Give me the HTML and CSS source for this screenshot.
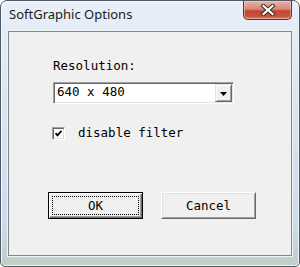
FILE: index.html
```html
<!DOCTYPE html>
<html>
<head>
  <link rel="stylesheet" href="styles.css">
</head>
<body>
  <div class="window">
    <div class="titlebar">
      <span class="title">SoftGraphic Options</span>
      <button class="close-btn">
        <svg viewBox="0 0 16 12" width="16" height="12">
          <path d="M3.5 2l9 8M12.5 2l-9 8" stroke="#3b2a28" stroke-width="4.2" stroke-linecap="square"/>
          <path d="M3.5 2l9 8M12.5 2l-9 8" stroke="#fff" stroke-width="2.2" stroke-linecap="square"/>
        </svg>
      </button>
    </div>

    <div class="client">
      <div class="fields">
        <div class="field-label">Resolution:</div>
        <div class="combo">
          <span class="combo-value">640 x 480</span>
          <span class="combo-btn">
            <svg viewBox="0 0 7 4" width="7" height="4">
              <path d="M0 0h7L3.5 4z" fill="#000"/>
            </svg>
          </span>
        </div>
        <label class="check">
          <span class="check-box">
            <svg viewBox="0 0 7 7" width="7" height="7">
              <path d="M0.5 3.2l2 2.2 4-4.6" fill="none" stroke="#000" stroke-width="1.8"/>
            </svg>
          </span>
          <span class="check-text">disable filter</span>
        </label>
      </div>

      <!-- dialog buttons -->
      <div class="buttons">
        <button class="btn default">OK</button>
        <button class="btn">Cancel</button>
      </div>
    </div>
  </div>
</body>
</html>
```

FILE: styles.css
```css
body {
  margin: 0;
  background: #fff;
}

.window {
  width: 300px;
  height: 267px;
  box-sizing: border-box;
  display: flex;
  flex-direction: column;
  border: 1px solid #4f5a66;
  border-radius: 7px 7px 5px 5px;
  background: linear-gradient(to bottom, #e8eff8 0%, #d9e4f0 45%, #cddaea 85%, #bfcfc2 100%);
  box-shadow: inset 1px 1px 0 #f4f8fc, inset -1px -1px 0 #eef3f8;
}

.titlebar {
  height: 30px;
  display: flex;
  justify-content: space-between;
  align-items: flex-start;
  padding: 0 7px 0 8px;
}

.title {
  margin-top: 5px;
  font-family: "Noto Sans", sans-serif;
  font-size: 13px;
  line-height: 17px;
  color: #1b1b1b;
}

.close-btn {
  width: 49px;
  height: 19px;
  padding: 0;
  border: 1px solid #6c2d25;
  border-top: none;
  border-radius: 0 0 5px 5px;
  background: linear-gradient(to bottom, #e9b2a6 0%, #d88978 45%, #c3432f 55%, #c9533a 85%, #db8a6d 100%);
  box-shadow: inset 0 0 0 1px rgba(255, 220, 210, 0.45);
  display: flex;
  align-items: center;
  justify-content: center;
}

.client {
  flex: 1;
  margin: 0 7px 10px 7px;
  border: 1px solid #7d8893;
  background: #f0f0f0;
  box-shadow: 0 0 0 1px #eef3f8;
  padding: 26px 0 0 39px;
  font-family: "DejaVu Sans Mono", "Liberation Mono", monospace;
  font-size: 12.5px;
  color: #000;
}

.fields {
  padding-left: 5px;
}

.field-label {
  line-height: 16px;
}

.combo {
  width: 181px;
  height: 22px;
  box-sizing: border-box;
  margin-top: 8px;
  display: flex;
  justify-content: space-between;
  align-items: flex-start;
  border: 1px solid;
  border-color: #a0a0a0 #fff #fff #a0a0a0;
  box-shadow: inset 1px 1px 0 #696969, inset -1px -1px 0 #e3e3e3;
  background: #fff;
  padding: 1px;
}

.combo-value {
  padding: 1px 0 0 2px;
  line-height: 14px;
}

.combo-btn {
  width: 17px;
  height: 18px;
  box-sizing: border-box;
  border: 1px solid;
  border-color: #e3e3e3 #696969 #696969 #e3e3e3;
  box-shadow: inset 1px 1px 0 #fff, inset -1px -1px 0 #a0a0a0;
  background: #f0f0f0;
  display: flex;
  align-items: center;
  justify-content: center;
  padding-top: 1px;
}

.check {
  margin: 21px 0 0 -1px;
  height: 16px;
  display: flex;
  align-items: center;
  gap: 13px;
  line-height: 16px;
}

.check-box {
  width: 13px;
  height: 13px;
  box-sizing: border-box;
  border: 1px solid;
  border-color: #a0a0a0 #fff #fff #a0a0a0;
  box-shadow: inset 1px 1px 0 #696969, inset -1px -1px 0 #e3e3e3;
  background: #fff;
  display: flex;
  align-items: center;
  justify-content: center;
}

.buttons {
  margin-top: 51px;
  display: flex;
  gap: 18px;
}

.btn {
  width: 95px;
  height: 27px;
  box-sizing: border-box;
  padding: 0;
  border: 1px solid;
  border-color: #fff #696969 #696969 #fff;
  box-shadow: inset 1px 1px 0 #e3e3e3, inset -1px -1px 0 #a0a0a0;
  background: #f0f0f0;
  font-family: "DejaVu Sans Mono", "Liberation Mono", monospace;
  font-size: 12.5px;
  color: #000;
}

.btn.default {
  border: 1px solid #000;
  box-shadow: inset 1px 1px 0 #fff, inset -1px -1px 0 #696969, inset -2px -2px 0 #a0a0a0;
  outline: 1px dotted #000;
  outline-offset: -5px;
}
```
